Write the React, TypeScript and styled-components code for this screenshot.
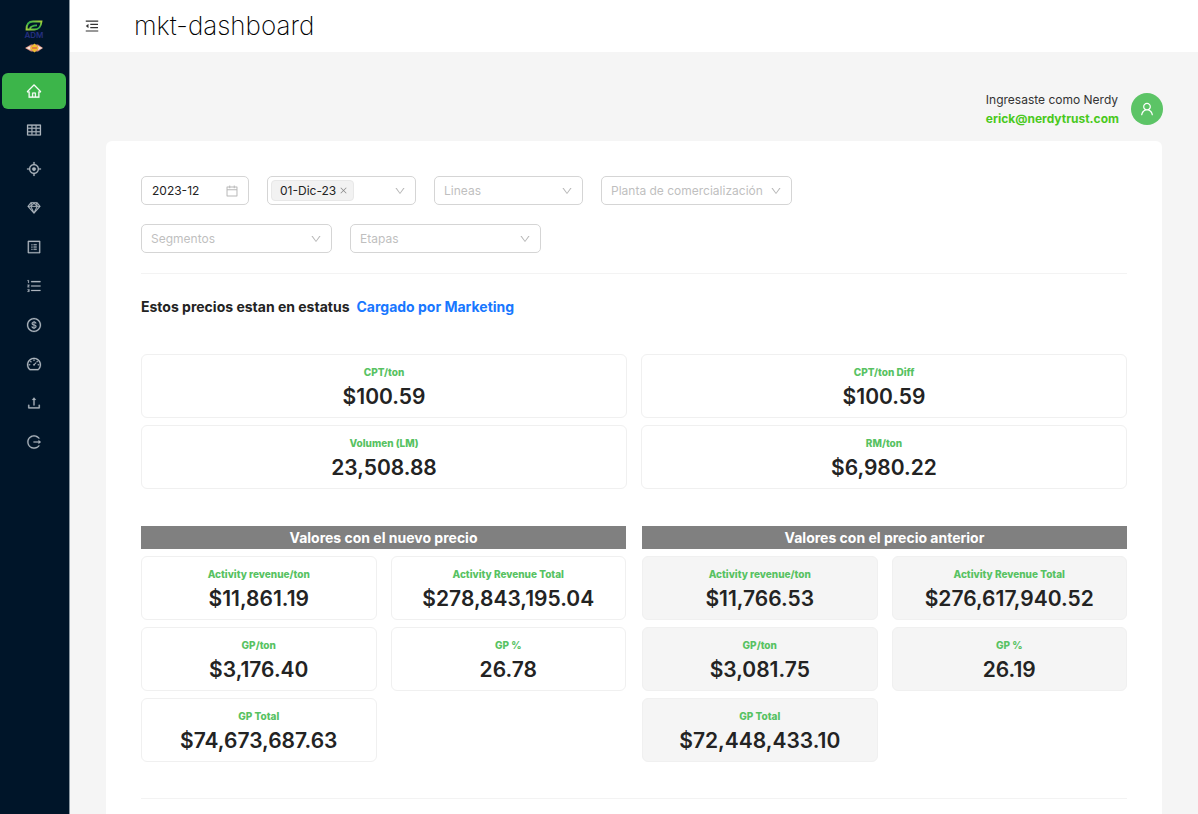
import React from "react";
import styled, { createGlobalStyle } from "styled-components";
import {
  AiOutlineAim,
  AiOutlineCalendar,
  AiOutlineClose,
  AiOutlineDashboard,
  AiOutlineDollarCircle,
  AiOutlineDown,
  AiOutlineHome,
  AiOutlineLogout,
  AiOutlineMenuFold,
  AiOutlineOrderedList,
  AiOutlineProfile,
  AiOutlineSketch,
  AiOutlineTable,
  AiOutlineUpload,
  AiOutlineUser,
} from "react-icons/ai";

const GlobalStyle = createGlobalStyle`
  *, *::before, *::after { box-sizing: border-box; }
  body {
    margin: 0;
    font-family: Inter, "Liberation Sans", sans-serif;
    font-size: 12px;
    color: #232323;
    background: #f5f5f5;
  }
  button, input, select { font: inherit; color: inherit; }
`;

const Layout = styled.div`
  display: flex;
  height: 100vh;
`;

const Sidebar = styled.aside`
  flex: 0 0 70px;
  background: #001529;
  border-right: 1px solid #8b98a2;
  padding: 18px 3px 0 2px;
`;

const Logo = styled.a`
  display: flex;
  justify-content: center;
  height: 55px;
`;

const Nav = styled.nav`
  display: flex;
  flex-direction: column;
  gap: 3px;
`;

const NavLink = styled.a<{ $active?: boolean }>`
  display: flex;
  align-items: center;
  justify-content: center;
  height: 36px;
  border-radius: 6px;
  font-size: 16px;
  color: ${(p) => (p.$active ? "#ffffff" : "#adb6be")};
  background: ${(p) => (p.$active ? "#3cb54a" : "transparent")};

  svg {
    stroke-width: 14;
  }
`;

const Main = styled.main`
  flex: 1;
  min-width: 0;
  overflow-y: auto;
  scrollbar-width: none;
`;

const Header = styled.header`
  display: flex;
  align-items: center;
  gap: 34px;
  height: 52px;
  padding: 0 14px;
  background: #ffffff;
`;

const FoldButton = styled.button`
  display: flex;
  padding: 0;
  border: 0;
  background: none;
  font-size: 16px;
  color: #333333;
  cursor: pointer;
`;

const Title = styled.h1`
  margin: 0;
  font-size: 26px;
  line-height: 32px;
  font-weight: 200;
  color: #000000;
`;

const UserBar = styled.div`
  display: flex;
  align-items: center;
  justify-content: flex-end;
  gap: 12px;
  padding: 38px 35px 13px;
`;

const UserText = styled.div`
  line-height: 19px;
  color: #333333;
`;

const Email = styled.a`
  display: block;
  font-weight: 700;
  color: #49c91c;
  text-decoration: none;
`;

const Avatar = styled.button`
  display: flex;
  align-items: center;
  justify-content: center;
  width: 32px;
  height: 32px;
  padding: 0;
  border: 0;
  border-radius: 50%;
  background: #5cc466;
  color: #ffffff;
  font-size: 16px;
`;

const Panel = styled.section`
  margin: 0 36px;
  padding: 35px;
  border-radius: 6px;
  background: #ffffff;
`;

const Filters = styled.form`
  display: flex;
  flex-wrap: wrap;
  gap: 19px 18px;
  max-width: 720px;
`;

const Field = styled.div<{ $width: number }>`
  position: relative;
  display: flex;
  align-items: center;
  width: ${(p) => p.$width}px;
  height: 29px;
  padding: 0 3px;
  border: 1px solid #d5d5d5;
  border-radius: 5px;
  background: #ffffff;

  > svg {
    position: absolute;
    right: 9px;
    font-size: 12px;
    color: #b8b8b8;
    pointer-events: none;
  }
`;

const CalendarIcon = styled(AiOutlineCalendar)`
  && {
    font-size: 14px;
  }
`;

const MonthInput = styled.input`
  width: 100%;
  padding: 0 7px;
  border: 0;
  outline: 0;
  background: transparent;
`;

const Select = styled.select`
  flex: 1;
  min-width: 0;
  height: 100%;
  padding: 0 6px;
  border: 0;
  outline: 0;
  appearance: none;
  background: transparent;
  color: #bfbfbf;
`;

const Tag = styled.span`
  display: flex;
  align-items: center;
  gap: 3px;
  height: 21px;
  padding: 0 5px 0 8px;
  border: 1px solid #e8e8e8;
  border-radius: 4px;
  background: #f2f2f2;
`;

const TagClose = styled.button`
  display: flex;
  padding: 0;
  border: 0;
  background: none;
  font-size: 9px;
  color: #888888;
`;

const Divider = styled.hr`
  width: 100%;
  height: 1px;
  margin: 0;
  border: 0;
  background: #f3f3f3;
`;

const FilterDivider = styled(Divider)`
  margin-top: 20px;
`;

const EndDivider = styled(Divider)`
  margin-top: 36px;
`;

const Status = styled.p`
  display: flex;
  gap: 7px;
  margin: 22px 0 36px;
  font-size: 14px;
  line-height: 22px;
  font-weight: 700;
`;

const StatusValue = styled.span`
  color: #1877ff;
`;

const Grid = styled.div`
  display: grid;
  grid-template-columns: 1fr 1fr;
  gap: 7px 14px;
`;

const Comparison = styled.div`
  display: grid;
  grid-template-columns: 1fr 1fr;
  gap: 16px;
  margin-top: 37px;
`;

const GroupTitle = styled.h2`
  margin: 0 0 7px;
  font-size: 14px;
  line-height: 23px;
  font-weight: 700;
  text-align: center;
  color: #ffffff;
  background: #808080;
`;

const Card = styled.article<{ $muted?: boolean }>`
  padding: 9px 8px 3px;
  border: 1px solid #f0f0f0;
  border-radius: 6px;
  text-align: center;
  background: ${(p) => (p.$muted ? "#f5f5f5" : "#ffffff")};
`;

const CardLabel = styled.h3`
  margin: 0;
  font-size: 10px;
  line-height: 16px;
  font-weight: 800;
  color: #57c262;
`;

const CardValue = styled.p`
  margin: 0;
  font-size: 21px;
  line-height: 34px;
  font-weight: 600;
`;

type Stat = [label: string, value: string];

const summary: Stat[] = [
  ["CPT/ton", "$100.59"],
  ["CPT/ton Diff", "$100.59"],
  ["Volumen (LM)", "23,508.88"],
  ["RM/ton", "$6,980.22"],
];

const newPrice: Stat[] = [
  ["Activity revenue/ton", "$11,861.19"],
  ["Activity Revenue Total", "$278,843,195.04"],
  ["GP/ton", "$3,176.40"],
  ["GP %", "26.78"],
  ["GP Total", "$74,673,687.63"],
];

const oldPrice: Stat[] = [
  ["Activity revenue/ton", "$11,766.53"],
  ["Activity Revenue Total", "$276,617,940.52"],
  ["GP/ton", "$3,081.75"],
  ["GP %", "26.19"],
  ["GP Total", "$72,448,433.10"],
];

const navItems = [
  { label: "Inicio", Icon: AiOutlineHome },
  { label: "Tabla", Icon: AiOutlineTable },
  { label: "Objetivos", Icon: AiOutlineAim },
  { label: "Productos", Icon: AiOutlineSketch },
  { label: "Perfil", Icon: AiOutlineProfile },
  { label: "Listas", Icon: AiOutlineOrderedList },
  { label: "Precios", Icon: AiOutlineDollarCircle },
  { label: "Tablero", Icon: AiOutlineDashboard },
  { label: "Cargar", Icon: AiOutlineUpload },
  { label: "Salir", Icon: AiOutlineLogout },
];

function Stats({ items, muted }: { items: Stat[]; muted?: boolean }) {
  return (
    <Grid>
      {items.map(([label, value]) => (
        <Card key={label} $muted={muted}>
          <CardLabel>{label}</CardLabel>
          <CardValue>{value}</CardValue>
        </Card>
      ))}
    </Grid>
  );
}

function SelectField({ label, width }: { label: string; width: number }) {
  return (
    <Field $width={width}>
      <Select aria-label={label} defaultValue="">
        <option value="">{label}</option>
      </Select>
      <AiOutlineDown />
    </Field>
  );
}

function BrandLogo() {
  return (
    <svg width="24" height="36" viewBox="0 0 24 36" aria-hidden="true">
      <defs>
        <linearGradient id="leaf" x1="0" y1="1" x2="1" y2="0">
          <stop offset="0" stopColor="#a5cf3a" />
          <stop offset="0.5" stopColor="#2fae4a" />
          <stop offset="1" stopColor="#a5cf3a" />
        </linearGradient>
      </defs>
      <path
        d="M4.500 11.500C4.500 6 7 3.500 11 3.500H19.500C19 9 16.500 11.500 12.500 11.500H4.500ZM8 10.500C8.500 8.500 10.500 7.500 15 7.300"
        fill="none"
        stroke="url(#leaf)"
        strokeWidth="1.800"
      />
      <text
        x="12"
        y="20"
        textAnchor="middle"
        fontFamily="Inter, sans-serif"
        fontSize="8"
        fontWeight="600"
        fill="#252f80"
      >
        ADM
      </text>
      <path d="M3 30L9 26.500H16L21 30L16 33.500H9Z" fill="#d98b78" />
      <path d="M4 30L8.500 28V32ZM20.500 30L16 28V32Z" fill="#f3e3dc" />
      <path d="M12.500 25.500L17 30L12.500 34.500L8 30Z" fill="#eec02f" />
      <path d="M10 30H15" stroke="#d9534a" strokeWidth="1.200" />
    </svg>
  );
}

export default function App() {
  return (
    <>
      <GlobalStyle />
      <Layout>
        <Sidebar>
          <Logo href="#" aria-label="ADM">
            <BrandLogo />
          </Logo>
          <Nav>
            {navItems.map(({ label, Icon }, i) => (
              <NavLink key={label} href="#" aria-label={label} $active={i === 0}>
                <Icon />
              </NavLink>
            ))}
          </Nav>
        </Sidebar>
        <Main>
          <Header>
            <FoldButton type="button" aria-label="Contraer menú">
              <AiOutlineMenuFold />
            </FoldButton>
            <Title>mkt-dashboard</Title>
          </Header>
          <UserBar>
            <UserText>
              Ingresaste como Nerdy
              <Email href="mailto:erick@nerdytrust.com">erick@nerdytrust.com</Email>
            </UserText>
            <Avatar type="button" aria-label="Cuenta">
              <AiOutlineUser />
            </Avatar>
          </UserBar>
          <Panel>
            <Filters>
              <Field $width={108}>
                <MonthInput aria-label="Mes" defaultValue="2023-12" />
                <CalendarIcon />
              </Field>
              <Field $width={149}>
                <Tag>
                  01-Dic-23
                  <TagClose type="button" aria-label="Quitar 01-Dic-23">
                    <AiOutlineClose />
                  </TagClose>
                </Tag>
                <Select aria-label="Fecha" defaultValue="">
                  <option value="" />
                </Select>
                <AiOutlineDown />
              </Field>
              <SelectField label="Lineas" width={149} />
              <SelectField label="Planta de comercialización" width={191} />
              <SelectField label="Segmentos" width={191} />
              <SelectField label="Etapas" width={191} />
            </Filters>
            <FilterDivider />
            <Status>
              Estos precios estan en estatus
              <StatusValue>Cargado por Marketing</StatusValue>
            </Status>
            <Stats items={summary} />
            <Comparison>
              <section>
                <GroupTitle>Valores con el nuevo precio</GroupTitle>
                <Stats items={newPrice} />
              </section>
              <section>
                <GroupTitle>Valores con el precio anterior</GroupTitle>
                <Stats items={oldPrice} muted />
              </section>
            </Comparison>
            <EndDivider />
          </Panel>
        </Main>
      </Layout>
    </>
  );
}
